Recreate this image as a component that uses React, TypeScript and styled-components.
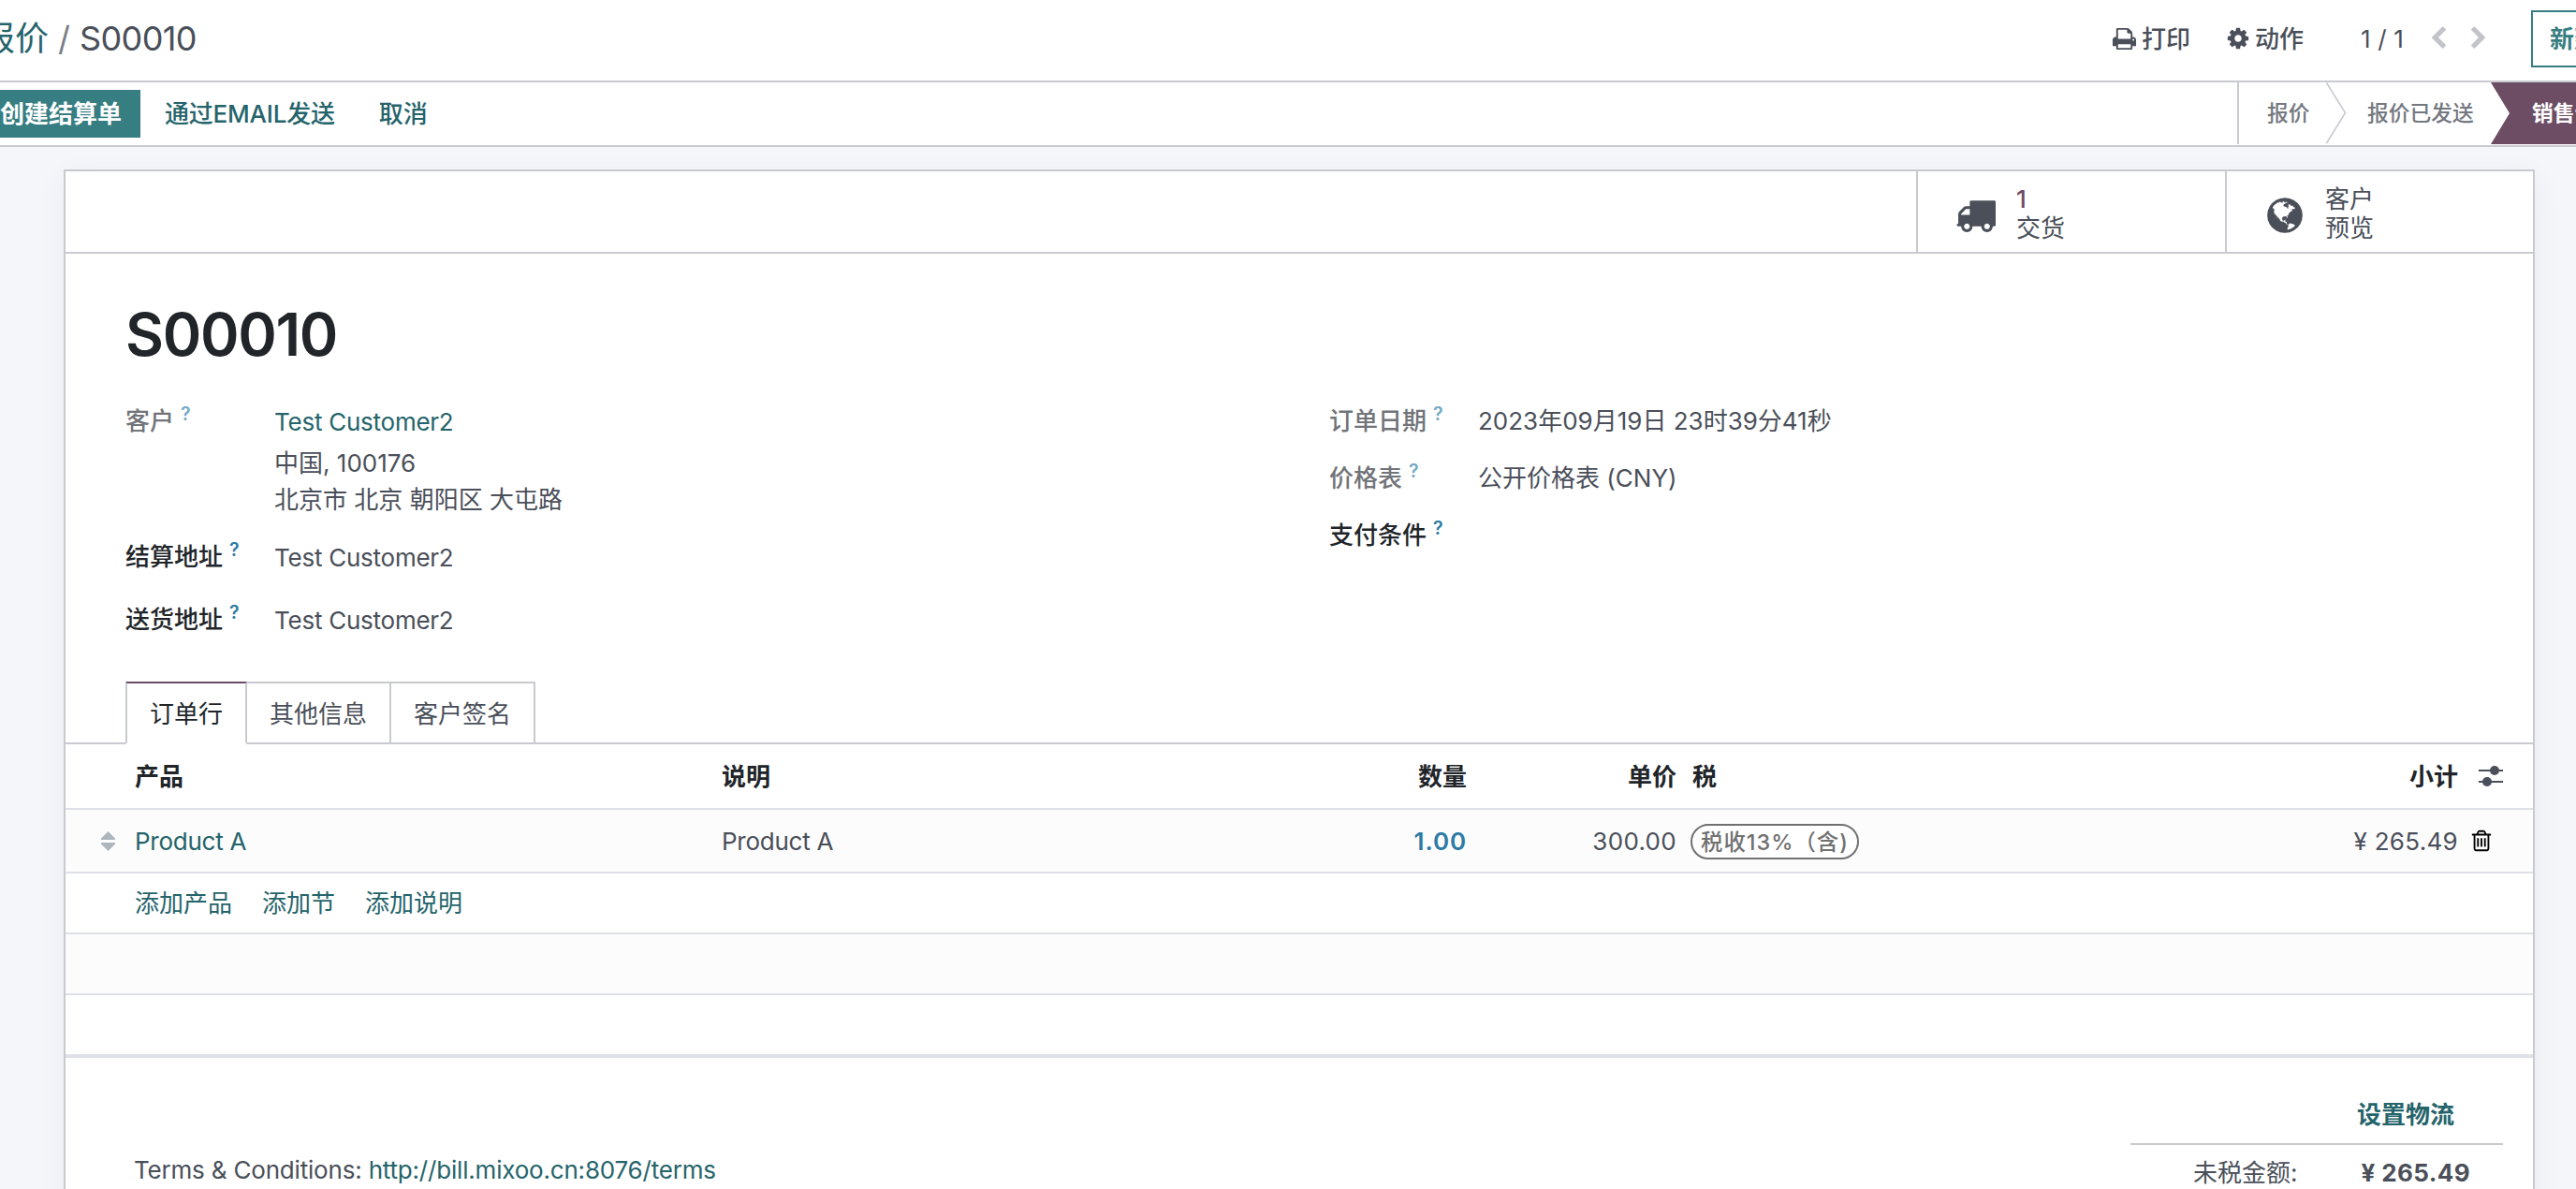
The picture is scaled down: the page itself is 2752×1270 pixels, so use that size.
import React from "react";
import styled, { createGlobalStyle } from "styled-components";

const Global = createGlobalStyle`
  *, *::before, *::after { box-sizing: border-box; }
  body {
    margin: 0;
    background: #f5f6fa;
    color: #495057;
    font-family: Inter, "Noto Sans CJK SC", sans-serif;
    font-size: 26px;
    line-height: 39px;
    overflow: hidden;
  }
`;

const teal = "#25646a";
const line = "#c9cad0";
const ink = "#212529";
const slate = "#4a4f59";

const Page = styled.div`
  width: 2752px;
  height: 1270px;
  overflow: hidden;
  color: ${slate};
`;

const ControlPanel = styled.header`
  display: flex;
  align-items: center;
  height: 88px;
  padding-bottom: 4px;
  background: #fff;
  border-bottom: 2px solid ${line};
`;

const Breadcrumb = styled.nav`
  display: flex;
  align-items: center;
  gap: 10px;
  margin-left: -20px;
  flex: 1;
  font-size: 36px;
  line-height: 48px;
`;
const CrumbLink = styled.a`
  color: ${teal};
`;
const Slash = styled.span`
  color: #7a7f87;
`;
const CrumbText = styled.span`
  letter-spacing: -0.6px;
`;

const MenuButton = styled.button`
  display: flex;
  align-items: center;
  gap: 5px;
  border: 0;
  padding: 0;
  margin: 0 38px 0 0;
  background: none;
  color: ${slate};
  font: inherit;
  font-weight: 500;
`;
const Pager = styled.div`
  display: flex;
  align-items: center;
  width: 181px;
  padding-left: 23px;
  margin-right: 24px;
  color: ${slate};
`;
const PagerValue = styled.span`
  width: 70px;
  letter-spacing: 0.2px;
  white-space: nowrap;
`;
const PagerArrow = styled.span`
  display: flex;
  width: 43px;
  padding-bottom: 1px;
  color: #c2c4ca;
`;
const NewButton = styled.button`
  width: 92px;
  height: 61px;
  margin-right: -44px;
  padding: 0 0 0 18px;
  border: 2px solid #377e82;
  background: #fff;
  color: #377e82;
  font: inherit;
  font-weight: 600;
  text-align: left;
  white-space: nowrap;
`;

const StatusBar = styled.div`
  display: flex;
  justify-content: space-between;
  height: 69px;
  background: #fff;
  border-bottom: 2px solid ${line};
`;
const Actions = styled.div`
  display: flex;
  align-items: center;
  font-weight: 500;
`;
const PrimaryAction = styled.button`
  height: 51px;
  padding: 0 20px 0 0;
  border: 0;
  background: #377e82;
  color: #fff;
  font: inherit;
  font-weight: 600;
`;
const TextAction = styled.button`
  margin-left: 26px;
  padding: 0 21px 0 0;
  border: 0;
  background: none;
  color: ${teal};
  font: inherit;
  letter-spacing: -0.2px;
`;
const Steps = styled.div`
  display: flex;
  height: 66px;
  border-left: 2px solid ${line};
  font-size: 22.75px;
  font-weight: 500;
  line-height: 66px;
  color: #74787f;
`;
const Step = styled.div<{ $width: number; $pad: number; $active?: boolean }>`
  width: ${(p) => p.$width}px;
  padding-left: ${(p) => p.$pad}px;
  white-space: nowrap;
  overflow: hidden;
  ${(p) =>
    p.$active &&
    `background: #6c4d64; color: #fff; font-weight: 700;
     clip-path: polygon(0 0, 100% 0, 100% 100%, 0 100%, 20px 50%);`}
`;
const StepArrow = styled.svg`
  display: block;
  width: 22px;
  height: 66px;
  flex: none;
`;

const Sheet = styled.main`
  width: 2640px;
  height: 1200px;
  margin: 24px 0 0 68px;
  background: #fff;
  border: 2px solid ${line};
  box-shadow: 0 10px 32px rgba(60, 65, 90, 0.06);
`;
const StatButtons = styled.div`
  display: flex;
  justify-content: flex-end;
  height: 88px;
  border-bottom: 2px solid ${line};
`;
const StatButton = styled.button<{ $width: number }>`
  display: flex;
  align-items: center;
  width: ${(p) => p.$width}px;
  padding: 4px 0 0 40px;
  border: 0;
  border-left: 2px solid ${line};
  background: none;
  color: ${slate};
  font: inherit;
  line-height: 31px;
  text-align: left;
`;
const StatIcon = styled.span`
  display: flex;
  width: 65px;
  padding-top: 3px;
`;
const StatLabel = styled.span`
  display: flex;
  flex-direction: column;
`;
const StatValue = styled.span`
  color: #714b67;
  font-weight: 500;
`;

const Title = styled.h1`
  margin: 46px 0 0 64px;
  font-size: 63px;
  line-height: 80px;
  font-weight: 600;
  letter-spacing: -1.3px;
  color: ${ink};
`;

const Groups = styled.div`
  display: grid;
  grid-template-columns: 1286px 1fr;
  height: 331px;
  padding: 32px 0 0 64px;
`;
const Field = styled.div<{ $height: number }>`
  display: flex;
  height: ${(p) => p.$height}px;
`;
const Label = styled.label<{ $muted?: boolean }>`
  display: flex;
  gap: 7px;
  width: 159px;
  padding-top: 1px;
  font-weight: 500;
  color: ${(p) => (p.$muted ? "#717479" : ink)};
`;
const Hint = styled.sup<{ $muted?: boolean }>`
  font-size: 19.5px;
  line-height: 24px;
  height: 24px;
  font-weight: 600;
  color: ${(p) => (p.$muted ? "#74a9c5" : "#2d7ba4")};
`;
const Value = styled.div<{ $shift?: number }>`
  padding-top: ${(p) => p.$shift ?? 0}px;
  white-space: nowrap;
`;
const Name = styled.span`
  letter-spacing: -0.25px;
`;
const RecordLink = styled.a`
  display: block;
  margin-bottom: 5px;
  color: ${teal};
`;
const AddressLine = styled.div`
  line-height: 39px;
`;

const Tabs = styled.div`
  display: flex;
  height: 67px;
  padding-left: 64px;
  border-bottom: 2px solid ${line};
`;
const Tab = styled.div<{ $active?: boolean; $width: number }>`
  width: ${(p) => p.$width}px;
  height: 67px;
  padding-top: 13px;
  text-align: center;
  border: 2px solid ${line};
  border-bottom: ${(p) => (p.$active ? "2px solid #fff" : `2px solid ${line}`)};
  border-left: ${(p) => (p.$active ? `2px solid ${line}` : "0")};
  border-top-color: ${(p) => (p.$active ? "#6c4d64" : line)};
  color: ${(p) => (p.$active ? ink : slate)};
`;

const Row = styled.div<{ $height: number; $shade?: boolean; $head?: boolean; $last?: boolean }>`
  display: grid;
  grid-template-columns: 74px 627px 596px 200px 224px 17px 600px 218px 1fr;
  align-items: center;
  height: ${(p) => p.$height}px;
  background: ${(p) => (p.$shade ? "#fcfcfd" : "#fff")};
  border-bottom: ${(p) => (p.$last ? 4 : 2)}px solid #dfe1e6;
  ${(p) => p.$head && `color: ${ink}; font-weight: 600;`}
`;
const Cell = styled.div<{ $right?: boolean }>`
  text-align: ${(p) => (p.$right ? "right" : "left")};
  white-space: nowrap;
`;
const HandleCell = styled.div`
  display: flex;
  padding-left: 38px;
`;
const IconCell = styled.div<{ $pad: number }>`
  display: flex;
  padding-left: ${(p) => p.$pad}px;
  color: #000;
`;
const ProductLink = styled.a`
  color: ${teal};
`;
const Money = styled.span`
  letter-spacing: 0.3px;
`;
const Quantity = styled.span`
  color: #2d7ba4;
  font-weight: 600;
  letter-spacing: 0.9px;
`;
const Tag = styled.span`
  display: inline-flex;
  align-items: center;
  width: 180px;
  height: 38px;
  margin-left: -2px;
  padding-left: 9px;
  border: 2px solid #717171;
  border-radius: 19px;
  background: #fff;
  color: #717171;
  font-size: 23.4px;
  font-weight: 500;
  letter-spacing: 1px;
  vertical-align: middle;
`;
const AddLinks = styled.div`
  display: flex;
  gap: 32px;
  color: ${teal};
  white-space: nowrap;
`;

const Footer = styled.div`
  display: flex;
  justify-content: space-between;
  padding: 41px 32px 0 73px;
`;
const Terms = styled.div`
  padding-top: 59px;
  letter-spacing: -0.19px;
`;
const Totals = styled.div`
  width: 398px;
`;
const ShippingLink = styled.div`
  height: 52px;
  padding-right: 52px;
  border-bottom: 2px solid ${line};
  color: ${teal};
  font-weight: 600;
  text-align: right;
`;
const TotalLine = styled.div`
  display: flex;
  justify-content: space-between;
  padding: 10px 35px 0 67px;
`;
const Amount = styled.span`
  font-weight: 700;
  letter-spacing: 0.4px;
`;

const Glyph = ({ d, size }: { d: string; size: number }) => (
  <svg width={size} height={size} viewBox="0 0 1792 1792" fill="currentColor" aria-hidden>
    <path d={d} />
  </svg>
);

const ICONS = {
  print:
    "M448 1536h896v-256h-896v256zm0-640h896v-384h-160q-40 0-68-28t-28-68v-160h-640v640zm1152 64q0-26-19-45t-45-19-45 19-19 45 19 45 45 19 45-19 19-45zm128 0v416q0 13-9.5 22.5t-22.5 9.5h-224v160q0 40-28 68t-68 28h-960q-40 0-68-28t-28-68v-160h-224q-13 0-22.5-9.5t-9.5-22.5v-416q0-79 56.5-135.5t135.5-56.5h64v-544q0-40 28-68t68-28h672q40 0 88 20t76 48l152 152q28 28 48 76t20 88v256h64q79 0 135.5 56.5t56.5 135.5z",
  cog: "M1152 896q0-106-75-181t-181-75-181 75-75 181 75 181 181 75 181-75 75-181zm512-109v222q0 12-8 23t-20 13l-185 28q-19 54-39 91 35 50 107 138 10 12 10 25t-9 23q-27 37-99 108t-94 71q-12 0-26-9l-138-108q-44 23-91 38-16 136-29 186-7 28-36 28h-222q-14 0-24.5-8.5t-11.5-21.5l-28-184q-49-16-90-37l-141 107q-10 9-25 9-14 0-25-11-126-114-165-168-7-10-7-23 0-12 8-23 15-21 51-66.5t54-70.5q-27-50-41-99l-183-27q-13-2-21-12.5t-8-23.5v-222q0-12 8-23t19-13l186-28q14-46 39-92-40-57-107-138-10-12-10-24 0-10 9-23 26-36 98.5-107.5t94.5-71.5q13 0 26 10l138 107q44-23 91-38 16-136 29-186 7-28 36-28h222q14 0 24.5 8.5t11.5 21.5l28 184q49 16 90 37l142-107q9-9 24-9 13 0 25 10 129 119 165 170 7 8 7 22 0 12-8 23-15 21-51 66.5t-54 70.5q26 50 41 98l183 28q13 2 21 12.5t8 23.5z",
  left: "M1427 301l-531 531 531 531q19 19 19 45t-19 45l-166 166q-19 19-45 19t-45-19l-742-742q-19-19-19-45t19-45l742-742q19-19 45-19t45 19l166 166q19 19 19 45t-19 45z",
  right:
    "M1363 877l-742 742q-19 19-45 19t-45-19l-166-166q-19-19-19-45t19-45l531-531-531-531q-19-19-19-45t19-45l166-166q19-19 45-19t45 19l742 742q19 19 19 45t-19 45z",
  truck:
    "M640 1408q0-52-38-90t-90-38-90 38-38 90 38 90 90 38 90-38 38-90zm-384-512h384v-256h-158q-13 0-22 9l-195 195q-9 9-9 22v30zm1280 512q0-52-38-90t-90-38-90 38-38 90 38 90 90 38 90-38 38-90zm256-1088v1024q0 15-4 26.5t-13.5 18.5-16.5 11.5-23.5 6-22.5 2-25.5 0-22.5-.5q0 106-75 181t-181 75-181-75-75-181h-384q0 106-75 181t-181 75-181-75-75-181h-64q-3 0-22.5.5t-25.5 0-22.5-2-23.5-6-16.5-11.5-13.5-18.5-4-26.5q0-26 19-45t45-19v-320q0-8-.5-35t0-38 2.5-34.5 6.5-37 14-30.5 22.5-30l198-198q19-19 50.5-32t58.5-13h160v-192q0-26 19-45t45-19h1024q26 0 45 19t19 45z",
  globe:
    "M896 128q209 0 385.5 103t279.5 279.5 103 385.5-103 385.5-279.5 279.5-385.5 103-385.5-103-279.5-279.5-103-385.5 103-385.5 279.5-279.5 385.5-103zm274 521q-2 1-9.5 9.5t-13.5 9.5q2 0 4.5-5t5-11 3.5-7q6-7 22-15 14-6 52-12 34-8 51 11-2-2 9.5-13t14.5-12q3-2 15-4.5t15-7.5l2-22q-12 1-17.5-7t-6.5-21q0 2-6 8 0-7-4.5-8t-11.5 1-9 1q-10-3-15-7.5t-8-16.5-4-15q-2-5-9.5-10.5t-9.5-10.5q-1-2-2.5-5.5t-3-6.5-4-5.5-5.5-2.5-7 5-7.5 10-4.5 5q-3-2-6-1.5t-4.5 1-4.5 3-5 3.5q-3 2-8.5 3t-8.5 2q15-5-1-11-10-4-16-3 9-4 7.5-12t-8.5-14h5q-1-4-8.5-8.5t-17.5-8.5-13-6q-8-5-34-9.5t-33-.5q-5 6-4.5 10.5t4 14 3.5 12.5q1 6-5.5 13t-6.5 12q0 7 14 15.5t10 21.5q-3 8-16 16t-16 12q-5 8-1.5 18.5t10.5 16.5q2 2 1.5 4t-3.5 4.5-5.5 4-6.5 3.5l-3 2q-11 5-20.5-6t-13.5-26q-7-25-16-30-23-8-29 1-5-13-41-26-25-9-58-4 6-1 0-15-7-15-19-12 3-6 4-17.5t1-13.5q3-13 12-23 1-1 7-8.5t9.5-13.5.5-6q35 4 50-11 5-5 11.5-17t10.5-17q9-6 14-5.5t14.5 5.5 14.5 5q14 1 15.5-11t-7.5-20q12 1 3-17-4-7-8-9-12-4-27 5-8 4 2 8-1-1-9.5 10.5t-16.5 17.5-16-5q-1-1-5.5-13.5t-9.5-13.5q-8 0-16 15 3-8-11-15t-24-8q19-12-8-27-7-4-20.5-5t-19.5 4q-5 7-5.5 11.5t5 8 10.5 5.5 11.5 4 8.5 3q14 10 8 14-2 1-8.5 3.5t-11.5 4.5-6 4q-3 4 0 14t-2 14q-5-5-9-17.5t-7-16.5q7 9-25 6l-10-1q-4 0-16 2t-20.5 1-13.5-8q-4-8 0-20 1-4 4-2-4-3-11-9.5t-10-8.5q-46 15-94 41 6 1 12-1 5-2 13-6.5t10-5.5q34-14 42-7l5-5q14 16 20 25-7-4-30-1-20 6-22 12 7 12 5 18-4-3-11.5-10t-14.5-11-15-5q-16 0-22 1-146 80-235 222 7 7 12 8 4 1 5 9t2.5 11 11.5-3q9 8 3 19 1-1 44 27 19 17 21 21 3 11-10 18-1-2-9-9t-9-4q-3 5 .5 18.5t10.5 12.5q-7 0-9.5 16t-2.5 35.5-1 23.5l2 1q-3 12 5.5 34.5t21.5 19.5q-13 3 20 43 6 8 8 9 3 2 12 7.5t15 10 10 10.5q4 5 10 22.5t14 23.5q-2 6 9.5 20t10.5 23q-1 0-2.5 1t-2.5 1q3 7 15.5 14t15.5 13q1 3 2 10t3 11 8 2q2-20-24-62-15-25-17-29-3-5-5.5-15.5t-4.5-14.5q2 0 6 1.5t8.5 3.5 7.5 4 2 3q-3 7 2 17.5t12 18.5 17 19 12 13q6 6 14 19.5t0 13.5q9 0 20 10.5t17 19.5q5 8 8 26t5 24q2 7 8.5 13.5t12.5 9.5l16 8 13 7q5 2 18.5 10.5t21.5 11.5q10 4 16 4t14.5-2.5 13.5-3.5q15-2 29 15t21 21q36 19 55 11-2 1 .5 7.5t8 15.5 9 14.5 5.5 8.5q5 6 18 15t18 15q6-4 7-9-3 8 7 20t18 10q14-3 14-32-31 15-49-18 0-1-2.5-5.5t-4-8.5-2.5-8.5 0-7.5 5-3q9 0 10-3.5t-2-12.5-4-13q-1-8-11-20t-12-15q-5 9-16 8t-16-9q0 1-1.5 5.5t-1.5 6.5q-13 0-15-1 1-3 2.5-17.5t3.5-22.5q1-4 5.5-12t7.5-14.5 4-12.5-4.5-9.5-17.5-2.5q-19 1-26 20-1 3-3 10.5t-5 11.5-9 7q-7 3-24 2t-24-5q-13-8-22.5-29t-9.5-37q0-10 2.5-26.5t3-25-5.5-24.5q3-2 9-9.5t10-10.5q2-1 4.5-1.5t4.5 0 4-1.5 3-6q-1-1-4-3-3-3-4-3 7 3 28.5-1.5t27.5 1.5q15 11 22-2 0-1-2.5-9.5t-.5-13.5q5 27 29 9 3 3 15.5 5t17.5 5q3 2 7 5.5t5.5 4.5 5-.5 8.5-6.5q10 14 12 24 11 40 19 44 7 3 11 2t4.5-9.5 0-14-1.5-12.5l-1-8v-18l-1-8q-15-3-18.5-12t1.5-18.5 15-18.5q1-1 8-3.5t15.5-6.5 12.5-8q21-19 15-35 7 0 11-9-1 0-5-3t-7.5-5-4.5-2q9-5 2-16 5-3 7.5-11t7.5-10q9 12 21 2 7-8 1-16 5-7 20.5-10.5t18.5-9.5q7 2 8-2t1-12 3-12q4-5 15-9t13-5l17-11q3-4 0-4 18 2 31-11 10-11-6-20 3-6-3-9.5t-15-5.5q3-1 11.5-.5t10.5-1.5q15-10-7-16-17-5-43 12zm-163 877q206-36 351-189-3-3-12.5-4.5t-12.5-3.5q-18-7-24-8 1-7-2.5-13t-8-9-12.5-8-11-7q-2-2-7-6t-7-5.5-7.5-4.5-8.5-2-10 1l-3 1q-3 1-5.5 2.5t-5.5 3-4 3 0 2.5q-21-17-36-22-5-1-11-5.5t-10.5-7-10-1.5-11.5 7q-5 5-6 15t-2 13q-7-5 0-17.5t2-18.5q-3-6-10.5-4.5t-12 4.5-11.5 8.5-9 6.5-8.5 5.5-8.5 7.5q-3 4-6 12t-5 11q-2-4-11.5-6.5t-9.5-5.5q2 10 4 35t5 38q7 31-12 48-27 25-29 40-4 22 12 26 0 7-8 20.5t-7 21.5q0 6 2 16z",
  trash:
    "M704 736v576q0 14-9 23t-23 9h-64q-14 0-23-9t-9-23v-576q0-14 9-23t23-9h64q14 0 23 9t9 23zm256 0v576q0 14-9 23t-23 9h-64q-14 0-23-9t-9-23v-576q0-14 9-23t23-9h64q14 0 23 9t9 23zm256 0v576q0 14-9 23t-23 9h-64q-14 0-23-9t-9-23v-576q0-14 9-23t23-9h64q14 0 23 9t9 23zm128 724v-948h-896v948q0 22 7 40.5t14.5 27 10.5 8.5h832q3 0 10.5-8.5t14.5-27 7-40.5zm-672-1076h448l-48-117q-7-9-17-11h-317q-10 2-17 11zm928 32v64q0 14-9 23t-23 9h-96v948q0 83-47 143.5t-113 60.5h-832q-66 0-113-58.5t-47-141.5v-952h-96q-14 0-23-9t-9-23v-64q0-14 9-23t23-9h309l70-167q15-37 54-63t79-26h320q40 0 79 26t54 63l70 167h309q14 0 23 9t9 23z",
};

export default function App() {
  return (
    <Page>
      <Global />
      <ControlPanel>
        <Breadcrumb>
          <CrumbLink>报价</CrumbLink>
          <Slash>/</Slash>
          <CrumbText>S00010</CrumbText>
        </Breadcrumb>
        <MenuButton>
          <Glyph d={ICONS.print} size={27} />
          打印
        </MenuButton>
        <MenuButton>
          <Glyph d={ICONS.cog} size={26} />
          动作
        </MenuButton>
        <Pager>
          <PagerValue>1 / 1</PagerValue>
          <PagerArrow>
            <Glyph d={ICONS.left} size={26} />
          </PagerArrow>
          <PagerArrow>
            <Glyph d={ICONS.right} size={26} />
          </PagerArrow>
        </Pager>
        <NewButton>新建</NewButton>
      </ControlPanel>

      <StatusBar>
        <Actions>
          <PrimaryAction>创建结算单</PrimaryAction>
          <TextAction>通过EMAIL发送</TextAction>
          <TextAction>取消</TextAction>
        </Actions>
        <Steps>
          <Step $width={93} $pad={30}>报价</Step>
          <StepArrow viewBox="0 0 22 66">
            <path d="M0.5 0.5L20.5 32.5L0.5 65" fill="none" stroke={line} strokeWidth="1.6" />
          </StepArrow>
          <Step $width={154} $pad={22}>报价已发送</Step>
          <Step $width={91} $pad={44} $active>销售订单</Step>
        </Steps>
      </StatusBar>

      <Sheet>
        <StatButtons>
          <StatButton $width={330}>
            <StatIcon>
              <Glyph d={ICONS.truck} size={43} />
            </StatIcon>
            <StatLabel>
              <StatValue>1</StatValue>
              <span>交货</span>
            </StatLabel>
          </StatButton>
          <StatButton $width={329}>
            <StatIcon>
              <Glyph d={ICONS.globe} size={44} />
            </StatIcon>
            <StatLabel>
              <span>客户</span>
              <span>预览</span>
            </StatLabel>
          </StatButton>
        </StatButtons>

        <Title>S00010</Title>

        <Groups>
          <div>
            <Field $height={145}>
              <Label $muted>
                客户<Hint $muted>?</Hint>
              </Label>
              <Value $shift={2}>
                <RecordLink>
                  <Name>Test Customer2</Name>
                </RecordLink>
                <AddressLine>中国, 100176</AddressLine>
                <AddressLine>北京市 北京 朝阳区 大屯路</AddressLine>
              </Value>
            </Field>
            <Field $height={67}>
              <Label>
                结算地址<Hint>?</Hint>
              </Label>
              <Value $shift={2}>
                <Name>Test Customer2</Name>
              </Value>
            </Field>
            <Field $height={67}>
              <Label>
                送货地址<Hint>?</Hint>
              </Label>
              <Value $shift={2}>
                <Name>Test Customer2</Name>
              </Value>
            </Field>
          </div>
          <div>
            <Field $height={61}>
              <Label $muted>
                订单日期<Hint $muted>?</Hint>
              </Label>
              <Value $shift={1}>2023年09月19日 23时39分41秒</Value>
            </Field>
            <Field $height={61}>
              <Label $muted>
                价格表<Hint $muted>?</Hint>
              </Label>
              <Value $shift={1}>公开价格表 (CNY)</Value>
            </Field>
            <Field $height={61}>
              <Label>
                支付条件<Hint>?</Hint>
              </Label>
            </Field>
          </div>
        </Groups>

        <Tabs>
          <Tab $active $width={130}>订单行</Tab>
          <Tab $width={154}>其他信息</Tab>
          <Tab $width={154}>客户签名</Tab>
        </Tabs>

        <Row $height={70} $head>
          <span />
          <Cell>产品</Cell>
          <Cell>说明</Cell>
          <Cell $right>数量</Cell>
          <Cell $right>单价</Cell>
          <span />
          <Cell>税</Cell>
          <Cell $right>小计</Cell>
          <IconCell $pad={22}>
            <svg width="26" height="24" viewBox="0 0 26 24" fill={slate}>
              <path d="M0 5h26v2H0zM0 17h26v2H0z" />
              <circle cx="17" cy="6" r="5" />
              <circle cx="9" cy="18" r="5" />
            </svg>
          </IconCell>
        </Row>
        <Row $height={68} $shade>
          <HandleCell>
            <svg width="15" height="21" viewBox="0 0 15 21" fill="#adb5bd">
              <path d="M7.5 0L15 7.5V9H0V7.5zM7.5 21L15 13.500V12H0V13.500z" />
            </svg>
          </HandleCell>
          <Cell>
            <ProductLink>
              <Name>Product A</Name>
            </ProductLink>
          </Cell>
          <Cell>
            <Name>Product A</Name>
          </Cell>
          <Cell $right>
            <Quantity>1.00</Quantity>
          </Cell>
          <Cell $right>
            <Money>300.00</Money>
          </Cell>
          <span />
          <Cell>
            <Tag>税收13%（含)</Tag>
          </Cell>
          <Cell $right>
            <Money>¥ 265.49</Money>
          </Cell>
          <IconCell $pad={12}>
            <Glyph d={ICONS.trash} size={26} />
          </IconCell>
        </Row>
        <Row $height={65}>
          <span />
          <AddLinks>
            <a>添加产品</a>
            <a>添加节</a>
            <a>添加说明</a>
          </AddLinks>
        </Row>
        <Row $height={65} $shade />
        <Row $height={67} $last />

        <Footer>
          <Terms>
            Terms &amp; Conditions: <ProductLink>http://bill.mixoo.cn:8076/terms</ProductLink>
          </Terms>
          <Totals>
            <ShippingLink>设置物流</ShippingLink>
            <TotalLine>
              <span>未税金额:</span>
              <Amount>¥ 265.49</Amount>
            </TotalLine>
          </Totals>
        </Footer>
      </Sheet>
    </Page>
  );
}
